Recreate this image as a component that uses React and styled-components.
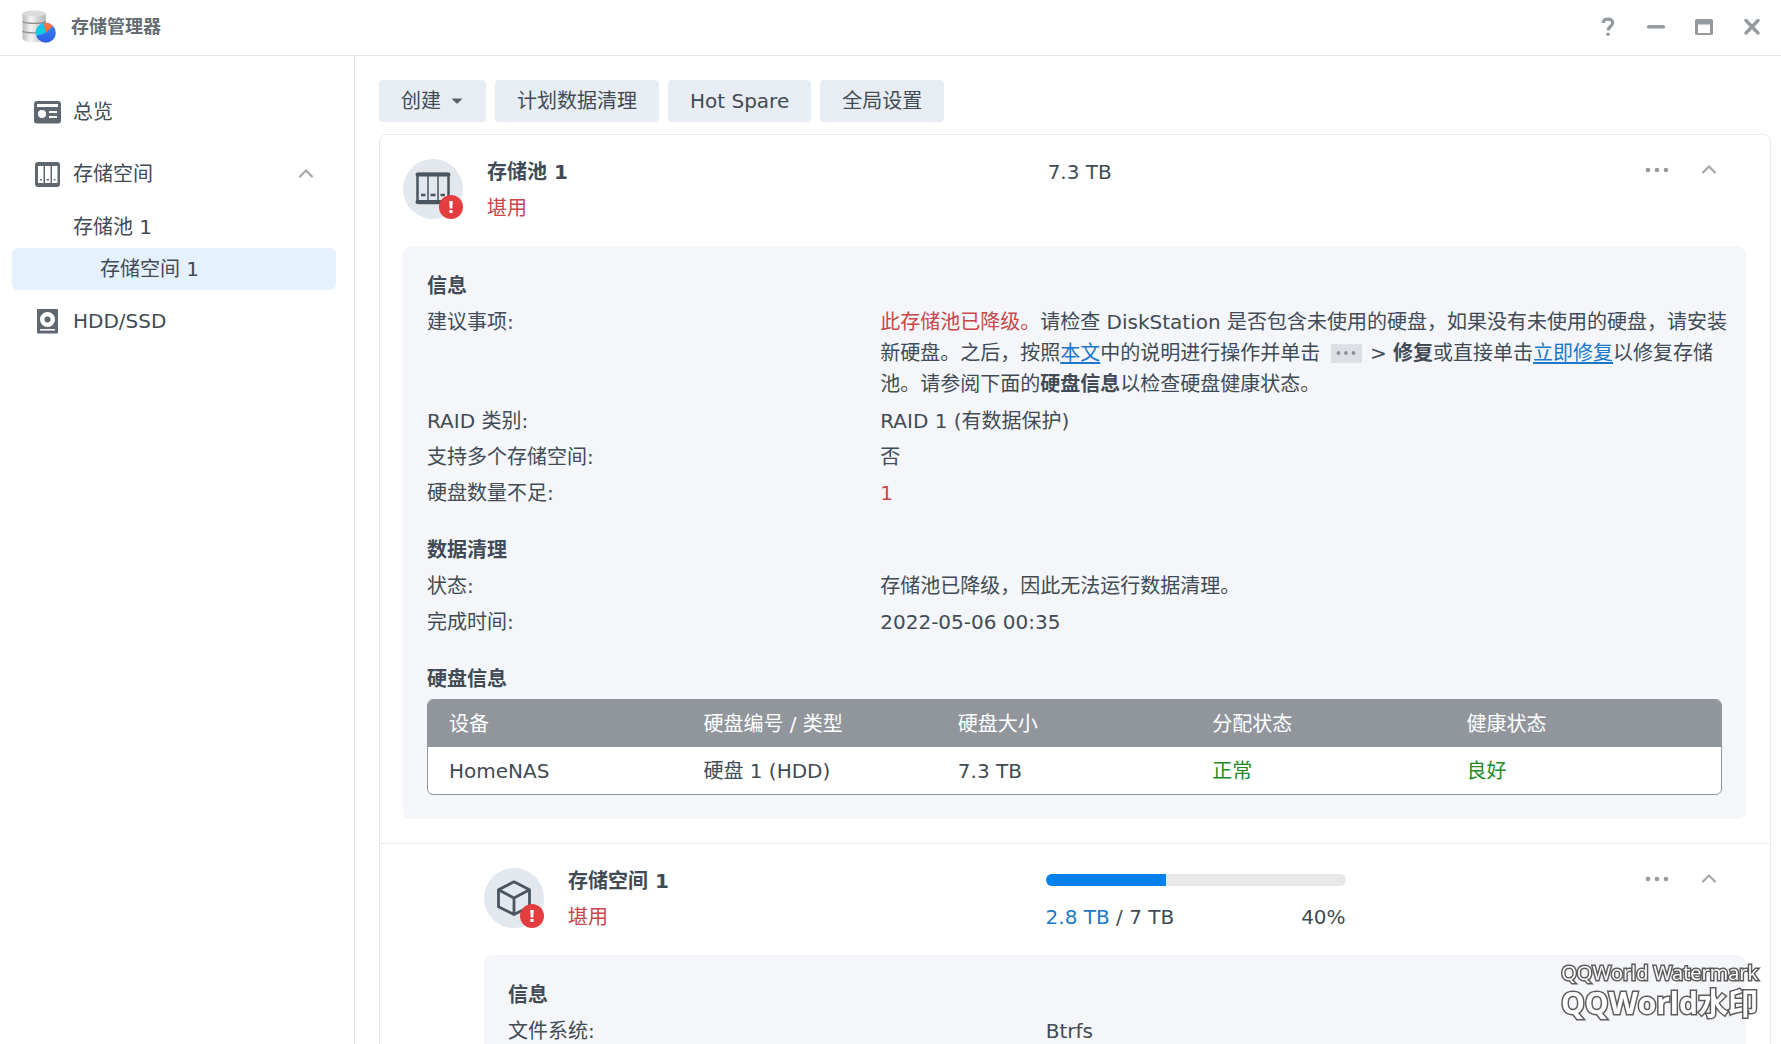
import React from "react";
import styled, { createGlobalStyle } from "styled-components";

const GlobalStyle = createGlobalStyle`
  * {
    box-sizing: border-box;
  }
  body {
    margin: 0;
    background: #fff;
    color: #414b55;
    font-family: "DejaVu Sans", "Noto Sans CJK SC", sans-serif;
    font-size: 20px;
    line-height: 30px;
  }
  button {
    font: inherit;
    color: inherit;
    border: 0;
    padding: 0;
    background: none;
    cursor: pointer;
  }
  svg {
    display: block;
  }
`;

const Window = styled.div`
  height: 100vh;
  display: flex;
  flex-direction: column;
  overflow: hidden;
`;

const TitleBar = styled.header`
  flex: none;
  height: 56px;
  display: flex;
  align-items: center;
  padding: 0 17px 2px 20px;
  border-bottom: 1px solid #dfe6e9;
  h1 {
    flex: 1;
    margin: 0 0 0 13px;
    font-size: 18px;
    line-height: 30px;
    color: #646c74;
  }
`;

const Controls = styled.div`
  display: flex;
  gap: 24px;
`;

const IconButton = styled.button`
  width: 24px;
  height: 24px;
  color: #959a9f;
`;

const Body = styled.div`
  flex: 1;
  min-height: 0;
  display: flex;
`;

const Sidebar = styled.nav`
  flex: none;
  width: 355px;
  padding: 35px 18px 0 12px;
  border-right: 1px solid #dfe6e9;
  ul {
    list-style: none;
    margin: 0;
    padding: 0;
  }
`;

const NavItem = styled.li`
  margin-bottom: ${(props) => props.$space || 0}px;
`;

const NavLink = styled.a`
  height: 42px;
  display: flex;
  align-items: center;
  gap: 11px;
  padding: 0 18px 0 ${(props) => props.$indent || 22}px;
  border-radius: 6px;
  color: inherit;
  text-decoration: none;
  background: ${(props) => (props.$active ? "#e5f1fd" : "none")};
  span {
    flex: 1;
  }
`;

const Main = styled.main`
  flex: 1;
  min-width: 0;
  overflow: hidden;
  padding: 24px 10px 0 24px;
`;

const Toolbar = styled.div`
  display: flex;
  gap: 9px;
  margin-bottom: 12px;
`;

const ToolButton = styled.button`
  height: 42px;
  display: flex;
  align-items: center;
  gap: 11px;
  padding: 0 22px;
  border-radius: 4px;
  background: #e8edf3;
  svg {
    margin-right: 2px;
  }
`;

const Card = styled.div`
  border: 1px solid #e6ebee;
  border-radius: 8px;
`;

const Section = styled.section`
  padding: 19px 24px 24px ${(props) => (props.$nested ? 104 : 23)}px;
  & + & {
    border-top: 1px solid #e6ebee;
  }
`;

const SectionHead = styled.div`
  display: flex;
  align-items: flex-start;
  margin-bottom: 20px;
  line-height: 36px;
`;

const Identity = styled.div`
  flex: none;
  width: ${(props) => props.$split};
  display: flex;
  gap: 24px;
  h2 {
    margin: 0;
    font-size: 20px;
  }
`;

const Badge = styled.div`
  position: relative;
  width: 60px;
  height: 60px;
  margin-top: 5px;
  border-radius: 50%;
  background: #e2e8ed;
  display: grid;
  place-items: center;
`;

const Alert = styled.svg`
  position: absolute;
  right: 0;
  bottom: 0;
`;

const Danger = styled.span`
  color: #c8474b;
`;

const Good = styled.span`
  color: #218c26;
`;

const Capacity = styled.div`
  flex: 1;
`;

const Usage = styled.div`
  width: 300px;
`;

const BarRow = styled.div`
  height: 36px;
  display: flex;
  align-items: center;
  padding-bottom: 2px;
`;

const Bar = styled.div`
  width: 100%;
  height: 12px;
  border-radius: 6px;
  overflow: hidden;
  background: #e7e8e9;
`;

const BarFill = styled.div`
  height: 100%;
  background: #0080ea;
`;

const UsageText = styled.div`
  display: flex;
  justify-content: space-between;
  em {
    font-style: normal;
    color: #2079c7;
  }
`;

const Actions = styled.div`
  display: flex;
  gap: 28px;
  padding: 4px 25px 0 0;
`;

const Panel = styled.div`
  padding: 22px 24px 24px;
  border-radius: 8px;
  background: #f4f6fa;
`;

const Group = styled.div`
  & + & {
    margin-top: 21px;
  }
  h3 {
    margin: 0;
    font-size: 20px;
    line-height: 36px;
  }
  dl {
    margin: 0;
  }
`;

const Row = styled.div`
  display: flex;
  padding: 3px 0;
  dt {
    flex: none;
    width: ${(props) => props.$split || "35%"};
  }
  dd {
    flex: 1;
    margin: 0;
  }
`;

const Advice = styled.p`
  margin: 0 -10px 0 0;
  line-height: 31px;
  a {
    color: #1a77c9;
    text-underline-offset: 2px;
  }
`;

const MoreChip = styled.span`
  display: inline-flex;
  align-items: center;
  justify-content: center;
  width: 31px;
  height: 19px;
  margin: 0 2px 0 4px;
  vertical-align: -3px;
  background: #dce0e5;
  color: #8b9094;
`;

const TableFrame = styled.div`
  margin-top: 2px;
  border: 1px solid #91969d;
  border-radius: 6px;
  overflow: hidden;
  background: #fff;
`;

const DiskTable = styled.table`
  width: 100%;
  table-layout: fixed;
  border-collapse: collapse;
  th,
  td {
    height: 47px;
    padding: 0;
    text-align: left;
    font-weight: normal;
  }
  th {
    background: #91969d;
    color: #fff;
  }
  th:first-child,
  td:first-child {
    width: 21.3%;
    padding-left: 21px;
  }
`;

const Watermark = styled.div`
  position: fixed;
  right: 23px;
  bottom: 26px;
  color: #fff;
  font-family: "Open Sans", "Noto Sans CJK SC", sans-serif;
  font-size: 20px;
  line-height: 30px;
  text-align: right;
  -webkit-text-stroke: 3px #5c5c5c;
  paint-order: stroke fill;
  strong {
    display: block;
    font-size: 30px;
  }
`;

function Logo() {
  return (
    <svg width="38" height="36" viewBox="0 0 38 36">
      <defs>
        <linearGradient id="metal">
          <stop offset="0" stopColor="#bdbdbd" />
          <stop offset="0.35" stopColor="#f4f4f4" />
          <stop offset="1" stopColor="#b4b4b4" />
        </linearGradient>
        <linearGradient id="blue" x1="0" y1="0" x2="0" y2="1">
          <stop offset="0" stopColor="#3f86f4" />
          <stop offset="1" stopColor="#2a5ce6" />
        </linearGradient>
      </defs>
      <path d="M2.500 4v25.500c0 2 5 3.500 11.700 3.500s11.700-1.500 11.700-3.500V4z" fill="url(#metal)" />
      <ellipse cx="14.200" cy="4.500" rx="11.700" ry="3" fill="#dcdcdc" />
      <path d="M2.500 12.500c3 2.500 20.500 2.500 23.400 0M2.500 22c3 2.500 20.500 2.500 23.400 0" fill="none" stroke="#8c8f92" strokeWidth="1.300" />
      <circle cx="25.800" cy="23.800" r="10" fill="url(#blue)" />
      <path d="M25.800 23.800L16.300 27A10 10 0 0 1 23.800 14z" fill="#14c8e6" />
      <path d="M25.800 23.800L23.800 14A10 10 0 0 1 33 17z" fill="#fb7440" />
    </svg>
  );
}

function OverviewIcon() {
  return (
    <svg width="28" height="28" viewBox="0 0 28 28">
      <rect x="0" y="3" width="27" height="22.500" rx="3" fill="#5f6871" />
      <path d="M3 6h21v3H3z" fill="#fff" />
      <circle cx="8" cy="16" r="4" fill="#fff" />
      <path d="M15 14h8M15 19h8" stroke="#fff" strokeWidth="1.800" />
    </svg>
  );
}

function StorageIcon() {
  return (
    <svg width="28" height="28" viewBox="0 0 28 28">
      <rect x="1" y="2" width="25" height="25" rx="3" fill="#5f6871" />
      <path d="M4 6h5.500v17H4zM11 6h5.500v17H11zM18 6h5.500v17H18z" fill="#fff" />
      <path d="M6 19h1.800v1.500H6zM12.500 19h2.500v1.500h-2.500zM19.700 19h1.800v1.500h-1.800z" fill="#5f6871" />
    </svg>
  );
}

function DiskIcon() {
  return (
    <svg width="28" height="28" viewBox="0 0 28 28">
      <rect x="3" y="2" width="21" height="24.500" rx="1" fill="#5f6871" />
      <circle cx="13.500" cy="12.500" r="5.300" fill="none" stroke="#fff" strokeWidth="4.500" />
      <path d="M6 22.800h15" stroke="#fff" strokeWidth="1.500" />
    </svg>
  );
}

function PoolIcon() {
  return (
    <svg width="60" height="60" viewBox="0 0 60 60" fill="none">
      <rect x="14.500" y="15" width="31" height="29" rx="1.500" stroke="#4a555f" strokeWidth="2.500" />
      <path d="M14.500 15.500h31M14.500 43h31" stroke="#4a555f" strokeWidth="4" strokeLinecap="round" />
      <path d="M25 16v27M35 16v27" stroke="#4a555f" strokeWidth="1.500" />
      <path d="M18 36h4.500M27.500 36h5M37.500 36h4.500" stroke="#4a555f" strokeWidth="2.500" />
    </svg>
  );
}

function CubeIcon() {
  return (
    <svg width="60" height="60" viewBox="0 0 60 60" fill="none">
      <path
        d="M30 13.800l15.500 8v17L30 46.500l-15.500-7.700v-17zM14.500 21.800L30 30l15.500-8.200M30 30v16.500"
        stroke="#4a555f"
        strokeWidth="2.800"
        strokeLinejoin="round"
      />
    </svg>
  );
}

function AlertMark() {
  return (
    <Alert width="24" height="24" viewBox="0 0 24 24">
      <circle cx="12" cy="12" r="12" fill="#e43d40" />
      <path d="M10.200 6h3.600l-.5 7.500h-2.600zM10.400 15h3.200v3h-3.200z" fill="#fff" />
    </Alert>
  );
}

function Chevron() {
  return (
    <svg width="24" height="24" viewBox="0 0 24 24" fill="none">
      <path d="M6 14.500l6-6 6 6" stroke="#a3a7aa" strokeWidth="2.200" strokeLinecap="round" />
    </svg>
  );
}

function Dots({ size = 24, gap = 9, r = 2.3 }) {
  return (
    <svg width={size} height={size} viewBox="0 0 24 24" fill="currentColor">
      <circle cx={12 - gap} cy="12" r={r} />
      <circle cx="12" cy="12" r={r} />
      <circle cx={12 + gap} cy="12" r={r} />
    </svg>
  );
}

function WindowControls() {
  return (
    <Controls>
      <IconButton aria-label="帮助">
        <svg width="24" height="24" viewBox="0 0 24 24" fill="none" stroke="currentColor" strokeWidth="3.200">
          <path d="M7.200 8C7.400 5.300 9.300 4.200 12 4.200c3 0 4.600 1.500 4.600 3.900 0 3.400-4.400 3.500-4.400 7.300" />
          <circle cx="12" cy="19.300" r="1.800" fill="currentColor" stroke="none" />
        </svg>
      </IconButton>
      <IconButton aria-label="最小化">
        <svg width="24" height="24" viewBox="0 0 24 24">
          <rect x="3" y="10" width="18" height="3.400" rx="1.500" fill="currentColor" />
        </svg>
      </IconButton>
      <IconButton aria-label="最大化">
        <svg width="24" height="24" viewBox="0 0 24 24">
          <path d="M4 4h16l1 1v14l-1 1H4l-1-1V5zM6 9.500v8.500h12v-8.500z" fill="currentColor" fillRule="evenodd" />
        </svg>
      </IconButton>
      <IconButton aria-label="关闭">
        <svg width="24" height="24" viewBox="0 0 24 24" stroke="currentColor" strokeWidth="3.400">
          <path d="M6 5.500l12 12.500M18 5.500l-12 12.500" strokeLinecap="round" />
        </svg>
      </IconButton>
    </Controls>
  );
}

function SectionActions() {
  return (
    <Actions>
      <IconButton aria-label="更多">
        <Dots />
      </IconButton>
      <IconButton aria-label="折叠">
        <Chevron />
      </IconButton>
    </Actions>
  );
}

function App() {
  return (
    <Window>
      <GlobalStyle />
      <TitleBar>
        <Logo />
        <h1>存储管理器</h1>
        <WindowControls />
      </TitleBar>
      <Body>
        <Sidebar>
          <ul>
            <NavItem $space={20}>
              <NavLink href="#overview">
                <OverviewIcon />
                <span>总览</span>
              </NavLink>
            </NavItem>
            <NavItem $space={11}>
              <NavLink href="#storage">
                <StorageIcon />
                <span>存储空间</span>
                <Chevron />
              </NavLink>
            </NavItem>
            <NavItem>
              <NavLink href="#pool-1" $indent={61}>
                <span>存储池 1</span>
              </NavLink>
            </NavItem>
            <NavItem $space={10}>
              <NavLink href="#volume-1" $indent={88} $active>
                <span>存储空间 1</span>
              </NavLink>
            </NavItem>
            <NavItem>
              <NavLink href="#disks">
                <DiskIcon />
                <span>HDD/SSD</span>
              </NavLink>
            </NavItem>
          </ul>
        </Sidebar>
        <Main>
          <Toolbar>
            <ToolButton>
              创建
              <svg width="10" height="6" viewBox="0 0 10 6">
                <path d="M0.500 0.500h9a.5.5 0 0 1 .3.8L5.500 5.600h-1L.2 1.300a.5.5 0 0 1 .3-.8z" fill="#5b646d" />
              </svg>
            </ToolButton>
            <ToolButton>计划数据清理</ToolButton>
            <ToolButton>Hot Spare</ToolButton>
            <ToolButton>全局设置</ToolButton>
          </Toolbar>
          <Card>
            <Section>
              <SectionHead>
                <Identity $split="48%">
                  <Badge>
                    <PoolIcon />
                    <AlertMark />
                  </Badge>
                  <div>
                    <h2>存储池 1</h2>
                    <Danger>堪用</Danger>
                  </div>
                </Identity>
                <Capacity>7.3 TB</Capacity>
                <SectionActions />
              </SectionHead>
              <Panel>
                <Group>
                  <h3>信息</h3>
                  <dl>
                    <Row>
                      <dt>建议事项:</dt>
                      <dd>
                        <Advice>
                          <Danger>此存储池已降级。</Danger>请检查 DiskStation
                          是否包含未使用的硬盘，如果没有未使用的硬盘，请安装新硬盘。之后，按照<a href="#article">本文</a>中的说明进行操作并单击{" "}
                          <MoreChip>
                            <Dots size={20} />
                          </MoreChip>{" "}
                          &gt; <b>修复</b>或直接单击<a href="#repair">立即修复</a>以修复存储池。请参阅下面的<b>硬盘信息</b>以检查硬盘健康状态。
                        </Advice>
                      </dd>
                    </Row>
                    <Row>
                      <dt>RAID 类别:</dt>
                      <dd>RAID 1 (有数据保护)</dd>
                    </Row>
                    <Row>
                      <dt>支持多个存储空间:</dt>
                      <dd>否</dd>
                    </Row>
                    <Row>
                      <dt>硬盘数量不足:</dt>
                      <dd>
                        <Danger>1</Danger>
                      </dd>
                    </Row>
                  </dl>
                </Group>
                <Group>
                  <h3>数据清理</h3>
                  <dl>
                    <Row>
                      <dt>状态:</dt>
                      <dd>存储池已降级，因此无法运行数据清理。</dd>
                    </Row>
                    <Row>
                      <dt>完成时间:</dt>
                      <dd>2022-05-06 00:35</dd>
                    </Row>
                  </dl>
                </Group>
                <Group>
                  <h3>硬盘信息</h3>
                  <TableFrame>
                    <DiskTable>
                      <thead>
                        <tr>
                          <th>设备</th>
                          <th>硬盘编号 / 类型</th>
                          <th>硬盘大小</th>
                          <th>分配状态</th>
                          <th>健康状态</th>
                        </tr>
                      </thead>
                      <tbody>
                        <tr>
                          <td>HomeNAS</td>
                          <td>硬盘 1 (HDD)</td>
                          <td>7.3 TB</td>
                          <td>
                            <Good>正常</Good>
                          </td>
                          <td>
                            <Good>良好</Good>
                          </td>
                        </tr>
                      </tbody>
                    </DiskTable>
                  </TableFrame>
                </Group>
              </Panel>
            </Section>
            <Section $nested>
              <SectionHead>
                <Identity $split="44.5%">
                  <Badge>
                    <CubeIcon />
                    <AlertMark />
                  </Badge>
                  <div>
                    <h2>存储空间 1</h2>
                    <Danger>堪用</Danger>
                  </div>
                </Identity>
                <Capacity>
                  <Usage>
                    <BarRow>
                      <Bar>
                        <BarFill style={{ width: "40%" }} />
                      </Bar>
                    </BarRow>
                    <UsageText>
                      <span>
                        <em>2.8 TB</em> / 7 TB
                      </span>
                      <span>40%</span>
                    </UsageText>
                  </Usage>
                </Capacity>
                <SectionActions />
              </SectionHead>
              <Panel>
                <Group>
                  <h3>信息</h3>
                  <dl>
                    <Row $split="44.3%">
                      <dt>文件系统:</dt>
                      <dd>Btrfs</dd>
                    </Row>
                  </dl>
                </Group>
              </Panel>
            </Section>
          </Card>
        </Main>
      </Body>
      <Watermark>
        QQWorld Watermark
        <strong>QQWorld水印</strong>
      </Watermark>
    </Window>
  );
}

export default App;
